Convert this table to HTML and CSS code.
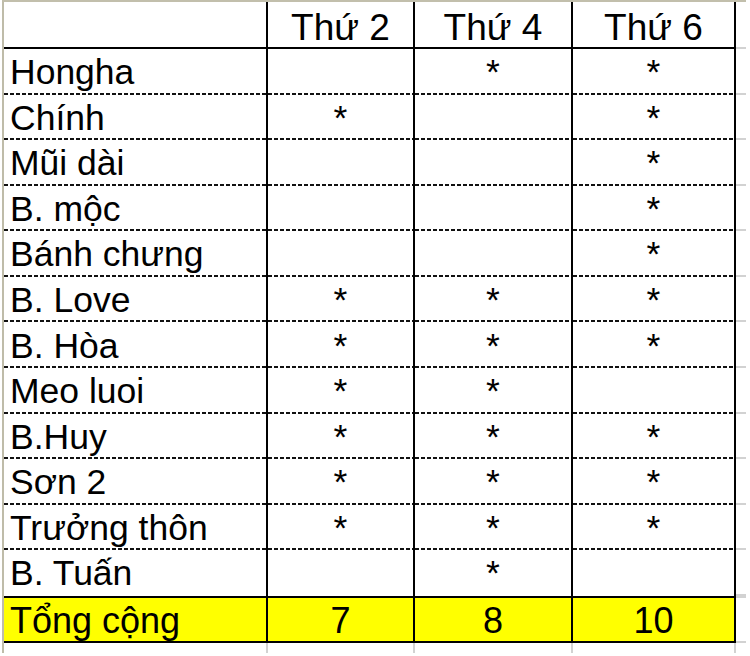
FILE: index.html
```html
<!DOCTYPE html>
<html lang="vi">
<head>
<meta charset="utf-8">
<title>Bảng điểm danh</title>
<link rel="stylesheet" href="styles.css">
</head>
<body>
<div class="sheet">
  <div class="c hd"></div><div class="c hd ctr">Thứ 2</div><div class="c hd ctr">Thứ 4</div><div class="c hd ctr">Thứ 6</div><div class="stub"></div>

  <div class="c d name">Hongha</div><div class="c d ctr"></div><div class="c d ctr">*</div><div class="c d ctr">*</div><div class="stub"></div>
  <div class="c d name">Chính</div><div class="c d ctr">*</div><div class="c d ctr"></div><div class="c d ctr">*</div><div class="stub"></div>
  <div class="c d name">Mũi dài</div><div class="c d ctr"></div><div class="c d ctr"></div><div class="c d ctr">*</div><div class="stub"></div>
  <div class="c d name">B. mộc</div><div class="c d ctr"></div><div class="c d ctr"></div><div class="c d ctr">*</div><div class="stub"></div>
  <div class="c d name">Bánh chưng</div><div class="c d ctr"></div><div class="c d ctr"></div><div class="c d ctr">*</div><div class="stub"></div>
  <div class="c d name">B. Love</div><div class="c d ctr">*</div><div class="c d ctr">*</div><div class="c d ctr">*</div><div class="stub"></div>
  <div class="c d name">B. Hòa</div><div class="c d ctr">*</div><div class="c d ctr">*</div><div class="c d ctr">*</div><div class="stub"></div>
  <div class="c d name">Meo luoi</div><div class="c d ctr">*</div><div class="c d ctr">*</div><div class="c d ctr"></div><div class="stub"></div>
  <div class="c d name">B.Huy</div><div class="c d ctr">*</div><div class="c d ctr">*</div><div class="c d ctr">*</div><div class="stub"></div>
  <div class="c d name">Sơn 2</div><div class="c d ctr">*</div><div class="c d ctr">*</div><div class="c d ctr">*</div><div class="stub"></div>
  <div class="c d name">Trưởng thôn</div><div class="c d ctr">*</div><div class="c d ctr">*</div><div class="c d ctr">*</div><div class="stub"></div>
  <div class="c d last name">B. Tuấn</div><div class="c d last ctr"></div><div class="c d last ctr">*</div><div class="c d last ctr"></div><div class="stub"></div>

  <div class="c tot name">Tổng cộng</div><div class="c tot ctr">7</div><div class="c tot ctr">8</div><div class="c tot ctr">10</div><div class="stub stub-tot"></div>

  <div class="foot"></div><div class="foot"></div><div class="foot"></div><div class="foot"></div><div class="foot-end"></div>
</div>
</body>
</html>
```

FILE: styles.css
```css
html, body {
  margin: 0;
  padding: 0;
  background: #ffffff;
}

body {
  font-family: "Liberation Sans", Arial, sans-serif;
  color: #000;
}

.sheet {
  margin-left: 2px;
  width: 742px;
  border-left: 2px solid #bfbca9;
  border-top: 2px solid #c2bfac;
  display: grid;
  grid-template-columns: 264px 147px 158px 163px 10px;
  grid-template-rows: 47px repeat(12, 45.583px) 47px 10px;
}

.c {
  box-sizing: border-box;
  border-right: 2px solid #000;
  display: flex;
  align-items: flex-end;
  line-height: 1;
  white-space: nowrap;
}

.ctr {
  justify-content: center;
}

.name {
  padding-left: 6px;
}

.hd {
  font-size: 37px;
  border-bottom: 2px solid #000;
  padding-bottom: 1px;
}

.d {
  font-size: 35.5px;
  padding-bottom: 4px;
  background-image: repeating-linear-gradient(90deg, #111 0 4px, transparent 4px 6px);
  background-size: 100% 2px;
  background-position: left bottom;
  background-repeat: no-repeat;
}

.d.last {
  background-image: none;
}

.tot {
  font-size: 36px;
  background: #ffff00;
  border-top: 2px solid #000;
  border-bottom: 2px solid #000;
  padding-bottom: 2px;
}

.stub {
  box-sizing: border-box;
  border-bottom: 2px solid #d2d2d2;
}

.stub-tot {
  border-top: 2px solid #d2d2d2;
}

.foot {
  box-sizing: border-box;
  border-right: 2px solid #d2d2d2;
}
```
